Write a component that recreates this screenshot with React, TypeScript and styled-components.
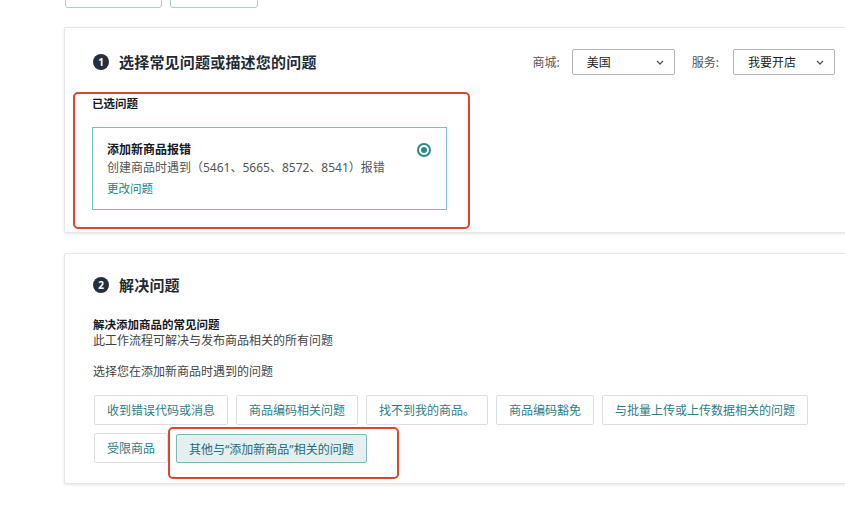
import { ReactNode } from 'react'
import styled, { createGlobalStyle } from 'styled-components'

const GlobalStyle = createGlobalStyle`
    html, body {
        margin: 0;
        padding: 0;
        background: #fff;
        overflow: hidden;
    }
    body {
        font-family: 'Noto Sans', 'Noto Sans CJK SC', sans-serif;
        color: #0f1111;
    }
`

const Page = styled.div`
    width: 845px;
    height: 513px;
    padding-left: 64px;
    box-sizing: border-box;
`
const TopRow = styled.div`
    display: flex;
    align-items: flex-end;
    gap: 8px;
    height: 8px;
    overflow: hidden;
    padding-left: 1px;
`
const StubButton = styled.div<{ w: number }>`
    flex-shrink: 0;
    width: ${p => p.w}px;
    height: 30px;
    border: 1px solid #a8cdd1;
    border-radius: 3px;
    box-sizing: border-box;
`
const Card = styled.section<{ top: number; pad: string }>`
    width: 790px;
    margin-top: ${p => p.top}px;
    padding: ${p => p.pad};
    border: 1px solid #e6e6e6;
    border-radius: 2px;
    box-shadow: 0 1px 3px rgba(0, 0, 0, 0.1);
    box-sizing: border-box;
    background: #fff;
`
const Header = styled.div<{ indent: number }>`
    display: flex;
    align-items: center;
    height: 26px;
    padding-left: ${p => p.indent}px;
`
const StepNum = styled.span`
    width: 16px;
    height: 16px;
    border-radius: 50%;
    background: #232f3e;
    color: #fff;
    font-size: 10px;
    font-weight: 700;
    display: flex;
    align-items: center;
    justify-content: center;
    margin-right: 10px;
    margin-top: -1px;
    flex-shrink: 0;
`
const Title = styled.h2`
    margin: 0 0 2px;
    font-size: 15px;
    font-weight: 600;
    color: #232a33;
    letter-spacing: 0.2px;
`
const Filters = styled.div`
    margin-left: auto;
    display: flex;
    align-items: center;
`
const FilterLabel = styled.span<{ gap: number; lead: number }>`
    font-size: 12px;
    color: #555;
    margin-left: ${p => p.lead}px;
    margin-right: ${p => p.gap}px;
`
const Select = styled.div<{ w: number }>`
    width: ${p => p.w}px;
    height: 26px;
    border: 1px solid #b4b4b4;
    border-radius: 2px;
    box-sizing: border-box;
    display: flex;
    align-items: center;
    justify-content: space-between;
    padding: 0 10px 0 14px;
    font-size: 12px;
    color: #222;
`
const RedFrame = styled.div`
    width: 397px;
    margin-top: 17px;
    padding: 2px 21px 17px 17px;
    border: 2px solid #db4531;
    border-radius: 5px;
    box-sizing: border-box;
`
const SmallBold = styled.div<{ top?: number }>`
    font-size: 11.5px;
    font-weight: 700;
    line-height: 16px;
    margin-top: ${p => p.top ?? 0}px;
    color: #16191f;
`
const Text = styled.div<{ top?: number }>`
    font-size: 12px;
    line-height: 16px;
    margin-top: ${p => p.top ?? 0}px;
    color: #444;
`
const Picked = styled.div`
    margin-top: 15px;
    height: 83px;
    border: 1px solid #7bbcc0;
    box-sizing: border-box;
    padding: 13px 15px 0 14px;
    display: flex;
    justify-content: space-between;
`
const PickedTitle = styled.div`
    font-size: 12px;
    font-weight: 700;
    line-height: 18px;
    color: #16191f;
`
const PickedDesc = styled.div`
    font-size: 12px;
    line-height: 18px;
    color: #555;
`
const Link = styled.a`
    display: block;
    margin-top: 3px;
    font-size: 11.5px;
    line-height: 18px;
    color: #1d7f8a;
    text-decoration: none;
`
const Radio = styled.span`
    width: 14px;
    height: 14px;
    margin-top: 2px;
    border-radius: 50%;
    border: 2px solid #2a8792;
    box-sizing: border-box;
    display: flex;
    align-items: center;
    justify-content: center;

    &::after {
        content: '';
        width: 6px;
        height: 6px;
        border-radius: 50%;
        background: #2a8792;
    }
`
const Body = styled.div`
    padding-left: 20px;
`
const Options = styled.div`
    margin-top: 15px;
    display: flex;
    flex-wrap: wrap;
    gap: 8px 8px;
    width: 730px;
    padding-left: 1px;
`
const Option = styled.button<{ active?: boolean }>`
    position: relative;
    height: ${p => (p.active ? 29 : 30)}px;
    padding: 0 12px;
    margin-top: ${p => (p.active ? 1 : 0)}px;
    font-family: 'Noto Sans', 'Noto Sans CJK SC', sans-serif;
    font-size: 12px;
    color: ${p => (p.active ? '#236d78' : '#2d7c86')};
    background: ${p => (p.active ? '#e4eff0' : '#fff')};
    border: 1px solid ${p => (p.active ? '#7fb6bb' : '#dcdfe0')};
    border-radius: 2px;
    cursor: pointer;
`
const Callout = styled.span`
    position: absolute;
    left: -9px;
    top: -8px;
    width: 231px;
    height: 52px;
    border: 2px solid #db4531;
    border-radius: 5px;
    box-sizing: border-box;
    pointer-events: none;
`

function Chevron() {
    return (
        <svg width='8' height='5' viewBox='0 0 8 5'>
            <path d='M1 1l3 3 3-3' fill='none' stroke='#555' strokeWidth='1.3' />
        </svg>
    )
}

function Step({ n, children }: { n: number; children: ReactNode }) {
    return (
        <>
            <StepNum>{n}</StepNum>
            <Title>{children}</Title>
        </>
    )
}

const options = [
    '收到错误代码或消息',
    '商品编码相关问题',
    '找不到我的商品。',
    '商品编码豁免',
    '与批量上传或上传数据相关的问题',
    '受限商品',
]

export default function App() {
    return (
        <Page>
            <GlobalStyle />
            <TopRow>
                <StubButton w={97} />
                <StubButton w={88} />
            </TopRow>

            <Card top={19} pad='21px 18px 3px 8px'>
                <Header indent={20}>
                    <Step n={1}>选择常见问题或描述您的问题</Step>
                    <Filters>
                        <FilterLabel lead={0} gap={12}>商城:</FilterLabel>
                        <Select w={103}>美国<Chevron /></Select>
                        <FilterLabel lead={17} gap={14}>服务:</FilterLabel>
                        <Select w={102}>我要开店<Chevron /></Select>
                    </Filters>
                </Header>
                <RedFrame>
                    <SmallBold>已选问题</SmallBold>
                    <Picked>
                        <div>
                            <PickedTitle>添加新商品报错</PickedTitle>
                            <PickedDesc>创建商品时遇到（5461、5665、8572、8541）报错</PickedDesc>
                            <Link href='#'>更改问题</Link>
                        </div>
                        <Radio />
                    </Picked>
                </RedFrame>
            </Card>

            <Card top={20} pad='18px 18px 20px 8px'>
                <Header indent={20}>
                    <Step n={2}>解决问题</Step>
                </Header>
                <Body>
                    <SmallBold top={19}>解决添加商品的常见问题</SmallBold>
                    <Text>此工作流程可解决与发布商品相关的所有问题</Text>
                    <Text top={15}>选择您在添加新商品时遇到的问题</Text>
                    <Options>
                        {options.map(o => (
                            <Option key={o}>{o}</Option>
                        ))}
                        <Option active>
                            其他与“添加新商品”相关的问题
                            <Callout />
                        </Option>
                    </Options>
                </Body>
            </Card>
        </Page>
    )
}
